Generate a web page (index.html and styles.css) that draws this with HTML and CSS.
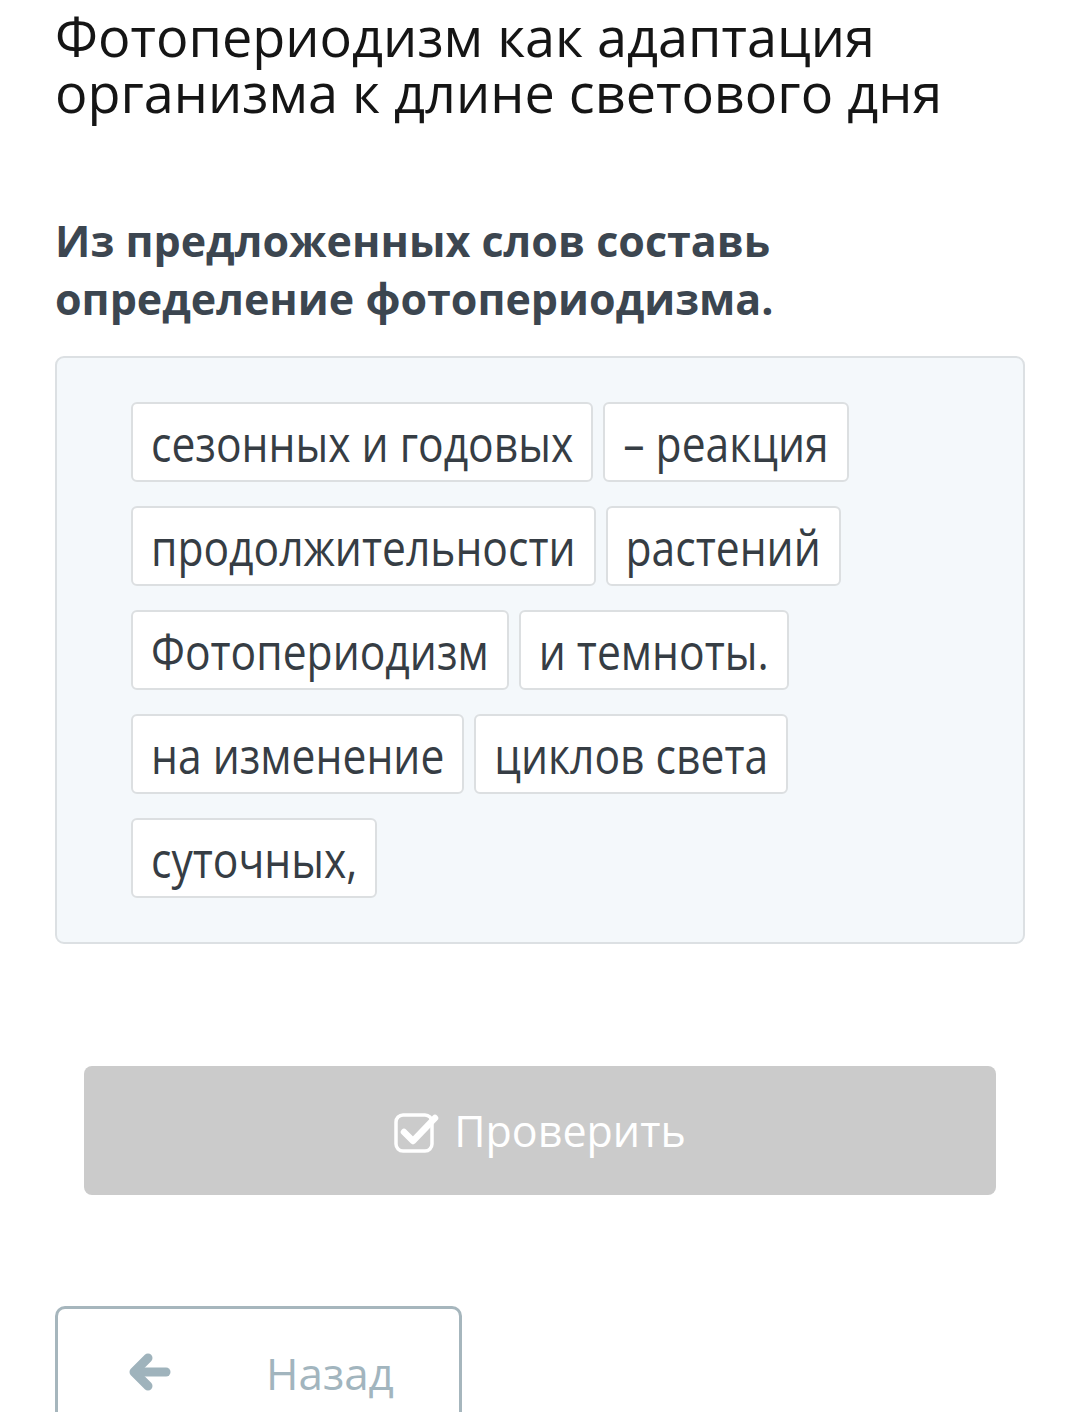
FILE: index.html
```html
<!DOCTYPE html>
<html lang="ru">
<head>
<meta charset="utf-8">
<link rel="stylesheet" href="styles.css">
</head>
<body>
<div class="page">
  <h1 class="title">Фотопериодизм как адаптация организма к длине светового дня</h1>
  <h2 class="task">Из предложенных слов составь определение фотопериодизма.</h2>
  <div class="bank">
    <span class="chip"><span class="word">сезонных и годовых</span></span>
    <span class="chip"><span class="word">– реакция</span></span>
    <span class="chip"><span class="word">продолжительности</span></span>
    <span class="chip"><span class="word">растений</span></span>
    <span class="chip"><span class="word">Фотопериодизм</span></span>
    <span class="chip"><span class="word">и темноты.</span></span>
    <span class="chip"><span class="word">на изменение</span></span>
    <span class="chip"><span class="word">циклов света</span></span>
    <span class="chip"><span class="word">суточных,</span></span>
  </div>
  <div class="check-wrap">
    <button class="check">
      <svg class="check-icon" viewBox="0 0 46 46" width="46" height="46">
        <rect x="2" y="7" width="36" height="36" rx="7" fill="none" stroke="#fff" stroke-width="3.5"/>
        <path d="M10 24 L19 33 L41 10" fill="none" stroke="#fff" stroke-width="6.5" stroke-linecap="round" stroke-linejoin="round"/>
      </svg>
      <span>Проверить</span>
    </button>
  </div>
  <button class="back">
    <svg class="back-icon" viewBox="0 0 44 40" width="44" height="40">
      <path d="M20 6 L6 20 L20 34" fill="none" stroke="#9fb3bc" stroke-width="9" stroke-linecap="round" stroke-linejoin="round"/>
      <path d="M8 20 H38" fill="none" stroke="#9fb3bc" stroke-width="9" stroke-linecap="round"/>
    </svg>
    <span>Назад</span>
  </button>
</div>
</body>
</html>
```
FILE: styles.css
```css
html, body {
  margin: 0;
  padding: 0;
  background: #fff;
}
body {
  font-family: "Open Sans", "Noto Sans", sans-serif;
  width: 1080px;
  height: 1412px;
  overflow: hidden;
}
.page {
  padding: 8px 55px 0 55px;
}
.title {
  margin: 0;
  font-weight: 400;
  font-size: 54px;
  line-height: 56px;
  color: #151515;
}
.task {
  margin: 92px 0 0 0;
  font-weight: 700;
  font-size: 43px;
  line-height: 58px;
  color: #3c4650;
}
.bank {
  margin-top: 28px;
  background: #f4f8fb;
  border: 2px solid #dce0e3;
  border-radius: 9px;
  padding: 44px 74px 44px 74px;
  display: flex;
  flex-wrap: wrap;
  gap: 24px 10px;
}
.chip {
  box-sizing: border-box;
  display: flex;
  align-items: center;
  height: 80px;
  padding: 0 18px;
  background: #fff;
  border: 2px solid #dcdfe1;
  border-radius: 6px;
  font-size: 42.6px;
  color: #363d44;
}
.word {
  display: inline-block;
  transform: scaleY(1.15);
}
.check-wrap {
  padding: 122px 29px 0 29px;
}
.check {
  width: 100%;
  height: 129px;
  border: none;
  border-radius: 8px;
  background: #cbcbcb;
  color: #fff;
  font-family: inherit;
  font-size: 43px;
  display: flex;
  align-items: center;
  justify-content: center;
  gap: 14px;
  padding: 0;
}
.check-icon {
  display: block;
}
.back {
  margin-top: 111px;
  width: 407px;
  height: 140px;
  border: 3px solid #a6b6bd;
  border-bottom: none;
  border-radius: 10px 10px 0 0;
  background: #fff;
  font-family: inherit;
  font-size: 44px;
  color: #a2b5be;
  display: flex;
  align-items: flex-start;
  padding: 34px 0 0 70px;
  gap: 94px;
  box-sizing: border-box;
}
.back-icon {
  display: block;
  margin-top: 9px;
}
```
